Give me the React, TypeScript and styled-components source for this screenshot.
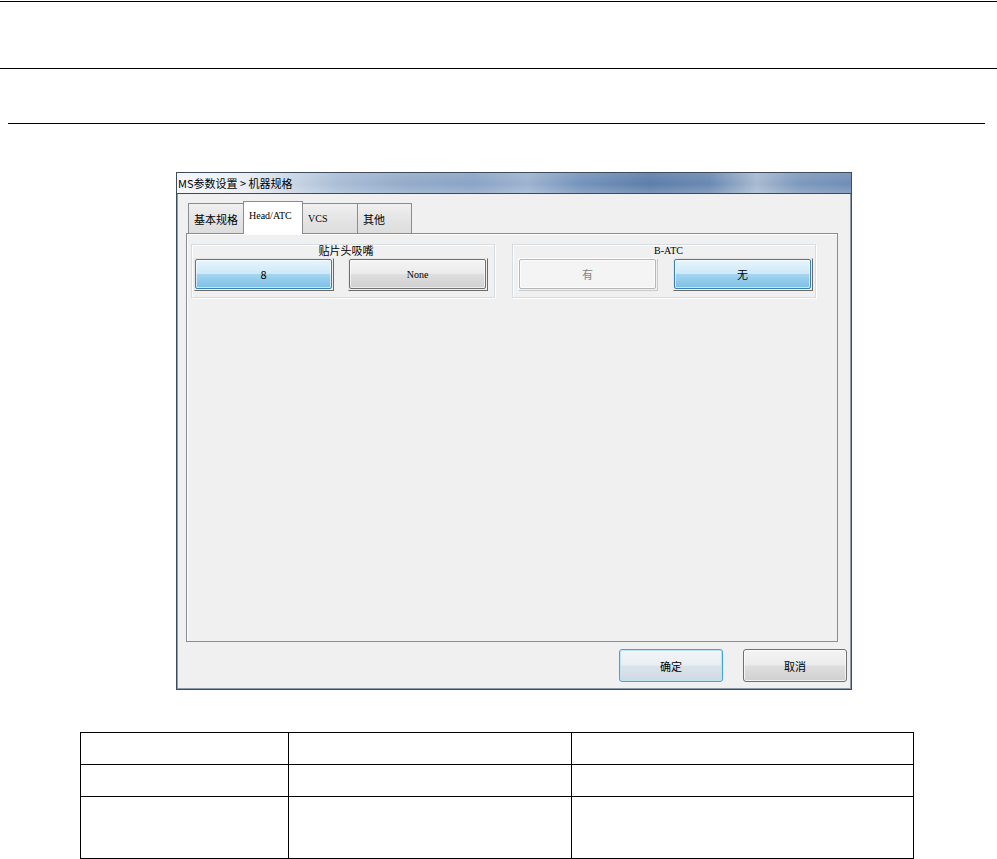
import styled, { createGlobalStyle } from "styled-components";

const GlobalStyle = createGlobalStyle`
  html, body {
    margin: 0;
    padding: 0;
    background: #ffffff;
  }
  body {
    font-family: "Noto Sans CJK SC", "Liberation Sans", sans-serif;
    color: #000;
  }
`;

const Page = styled.div`
  width: 997px;
  height: 859px;
  overflow: hidden;
  display: flex;
  flex-direction: column;
  background: #fff;
`;

const Rule = styled.div<{ $top: number; $left?: number; $right?: number }>`
  height: 1px;
  background: #000;
  margin: ${(p) => p.$top}px ${(p) => p.$right ?? 0}px 0 ${(p) => p.$left ?? 0}px;
`;

const serifStack = `"Liberation Serif", "Noto Sans CJK SC", serif`;
const sansStack = `"Noto Sans CJK SC", "Liberation Sans", sans-serif`;

/* ---- the embedded dialog screenshot ---- */

const Window = styled.div`
  margin: 48px 0 0 176px;
  width: 676px;
  height: 518px;
  box-sizing: border-box;
  border: 1px solid #3f4c5d;
  box-shadow: inset 1px 0 0 #8d9aab, inset -1px 0 0 #8d9aab, inset 0 -1px 0 #8d9aab;
  display: flex;
  flex-direction: column;
  background: #f0f0f0;
`;

const TitleBar = styled.div`
  height: 20px;
  border-bottom: 1px solid #3c4a5c;
  padding-left: 1px;
  font-size: 11px;
  line-height: 20px;
  white-space: nowrap;
  background:
    linear-gradient(180deg, rgba(255, 255, 255, 0.1) 0%, rgba(255, 255, 255, 0) 55%, rgba(255, 255, 255, 0.18) 100%),
    linear-gradient(
      90deg,
      #f4f6f9 0%,
      #e9eef4 10%,
      #cdd9e7 16%,
      #a9bdd6 24%,
      #93abca 34%,
      #8aa4c6 44%,
      #9cb3d0 52%,
      #7593bb 60%,
      #5d7ea9 70%,
      #6a89b2 79%,
      #a6b9d0 86%,
      #7f9abd 92%,
      #6f8db5 100%
    );
`;

const Body = styled.div`
  flex: 1;
  display: flex;
  flex-direction: column;
  padding: 7px 13px 7px 9px;
`;

const TabStrip = styled.div`
  display: flex;
  align-items: flex-end;
  height: 32px;
  padding-left: 2px;
`;

const Tab = styled.div<{ $active?: boolean; $w: number; $serif?: boolean }>`
  position: relative;
  z-index: ${(p) => (p.$active ? 2 : 1)};
  box-sizing: border-box;
  width: ${(p) => p.$w}px;
  height: ${(p) => (p.$active ? 33 : 30)}px;
  margin-bottom: ${(p) => (p.$active ? -1 : 0)}px;
  margin-right: -1px;
  padding: ${(p) => (p.$active ? 7 : 8)}px 0 0 5px;
  border: 1px solid #898c95;
  border-bottom: none;
  background: ${(p) => (p.$active ? "#ffffff" : "linear-gradient(#f0f0f0, #e5e5e5 50%, #dddddd)")};
  font-family: ${(p) => (p.$serif ? serifStack : sansStack)};
  font-size: ${(p) => (p.$serif ? 10 : 11)}px;
  line-height: 14px;
`;

const Panel = styled.div`
  flex: 1;
  box-sizing: border-box;
  border: 1px solid #898c95;
  box-shadow: inset 1px 1px 0 #ffffff;
  background: #f0f0f0;
  padding: 10px 0 0 4px;
  display: flex;
  align-items: flex-start;
  gap: 17px;
`;

const Group = styled.div<{ $padLeft: number }>`
  box-sizing: border-box;
  width: 304px;
  border: 1px solid #d5dde4;
  box-shadow: inset 1px 1px 0 #ffffff, 1px 1px 0 #ffffff;
  padding: 0 6px 6px ${(p) => p.$padLeft}px;
`;

const GroupLabel = styled.div<{ $serif?: boolean }>`
  height: 13px;
  text-align: center;
  font-family: ${(p) => (p.$serif ? serifStack : sansStack)};
  font-size: ${(p) => (p.$serif ? 10 : 11)}px;
  line-height: 11px;
  padding-left: 10px;
`;

const ButtonRow = styled.div<{ $gap: number }>`
  display: grid;
  grid-template-columns: 140px 140px;
  column-gap: ${(p) => p.$gap}px;
`;

type Tone = "blue" | "gray" | "off";

const Frame = styled.div<{ $tone: Tone }>`
  box-sizing: border-box;
  height: 33px;
  padding: 0 1px 1px 0;
  border: 1px solid;
  border-color: ${(p) =>
    p.$tone === "off" ? "#ffffff #c9c9c9 #c9c9c9 #ffffff" : "#e6e6e6 #6a6a6a #6a6a6a #e6e6e6"};
  display: flex;
`;

const ToggleButton = styled.div<{ $tone: Tone; $serif?: boolean }>`
  flex: 1;
  box-sizing: border-box;
  display: flex;
  align-items: center;
  justify-content: center;
  border-radius: 2px;
  border: 1px solid
    ${(p) => (p.$tone === "blue" ? "#3c7fb1" : p.$tone === "gray" ? "#707070" : "#b3b7ba")};
  background: ${(p) =>
    p.$tone === "blue"
      ? "linear-gradient(#e6f4fc 0%, #cfe9f8 48%, #a3d4f0 52%, #7cbfe5 100%)"
      : p.$tone === "gray"
      ? "linear-gradient(#f4f4f4 0%, #ebebeb 48%, #dedede 52%, #d0d0d0 100%)"
      : "#f4f4f4"};
  box-shadow: inset 0 0 0 1px ${(p) => (p.$tone === "off" ? "#fcfcfc" : "rgba(255,255,255,0.6)")};
  color: ${(p) => (p.$tone === "off" ? "#838383" : "#000")};
  font-family: ${(p) => (p.$serif ? serifStack : sansStack)};
  font-size: ${(p) => (p.$serif ? 10 : 11)}px;
`;

const Footer = styled.div`
  display: flex;
  justify-content: flex-end;
  gap: 20px;
  margin: 7px -9px 0 0;
`;

const DialogButton = styled.div<{ $focused?: boolean }>`
  box-sizing: border-box;
  width: 104px;
  height: 33px;
  display: flex;
  align-items: center;
  justify-content: center;
  border-radius: 3px;
  border: 1px solid ${(p) => (p.$focused ? "#3fa6dc" : "#707070")};
  background: ${(p) =>
    p.$focused
      ? "linear-gradient(#f4f6f8 0%, #e9eef2 48%, #dbe3ea 52%, #cfd9e1 100%)"
      : "linear-gradient(#f4f4f4 0%, #ebebeb 48%, #dedede 52%, #d0d0d0 100%)"};
  box-shadow: inset 0 0 0 1px ${(p) => (p.$focused ? "#bfe3f5" : "rgba(255,255,255,0.7)")};
  font-size: 11px;
`;

/* ---- the table below the figure ---- */

const Table = styled.table`
  margin: 42px 0 0 80px;
  width: 833px;
  border-collapse: collapse;
  table-layout: fixed;
  td {
    border: 1px solid #000;
    padding: 0;
  }
`;

const Row = styled.tr<{ $h: number }>`
  height: ${(p) => p.$h}px;
`;

const groups = [
  {
    label: "贴片头吸嘴",
    serif: false,
    padLeft: 2,
    gap: 14,
    buttons: [
      { text: "8", tone: "blue" as Tone, serif: false },
      { text: "None", tone: "gray" as Tone, serif: true },
    ],
  },
  {
    label: "B-ATC",
    serif: true,
    padLeft: 5,
    gap: 15,
    buttons: [
      { text: "有", tone: "off" as Tone, serif: false },
      { text: "无", tone: "blue" as Tone, serif: false },
    ],
  },
];

const App: React.FC = () => {
  return (
    <Page>
      <GlobalStyle />
      <Rule $top={1} />
      <Rule $top={66} />
      <Rule $top={54} $left={8} $right={12} />

      <Window>
        <TitleBar>MS参数设置 &gt; 机器规格</TitleBar>
        <Body>
          <TabStrip>
            <Tab $w={56}>基本规格</Tab>
            <Tab $w={60} $active $serif>
              Head/ATC
            </Tab>
            <Tab $w={56} $serif>
              VCS
            </Tab>
            <Tab $w={55}>其他</Tab>
          </TabStrip>
          <Panel>
            {groups.map((g) => (
              <Group key={g.label} $padLeft={g.padLeft}>
                <GroupLabel $serif={g.serif}>{g.label}</GroupLabel>
                <ButtonRow $gap={g.gap}>
                  {g.buttons.map((b) => (
                    <Frame key={b.text} $tone={b.tone}>
                      <ToggleButton $tone={b.tone} $serif={b.serif}>
                        {b.text}
                      </ToggleButton>
                    </Frame>
                  ))}
                </ButtonRow>
              </Group>
            ))}
          </Panel>
          <Footer>
            <DialogButton $focused>确定</DialogButton>
            <DialogButton>取消</DialogButton>
          </Footer>
        </Body>
      </Window>

      <Table>
        <colgroup>
          <col style={{ width: 208 }} />
          <col style={{ width: 283 }} />
          <col style={{ width: 342 }} />
        </colgroup>
        <tbody>
          <Row $h={32}>
            <td />
            <td />
            <td />
          </Row>
          <Row $h={32}>
            <td />
            <td />
            <td />
          </Row>
          <Row $h={62}>
            <td />
            <td />
            <td />
          </Row>
        </tbody>
      </Table>
    </Page>
  );
};

export default App;
